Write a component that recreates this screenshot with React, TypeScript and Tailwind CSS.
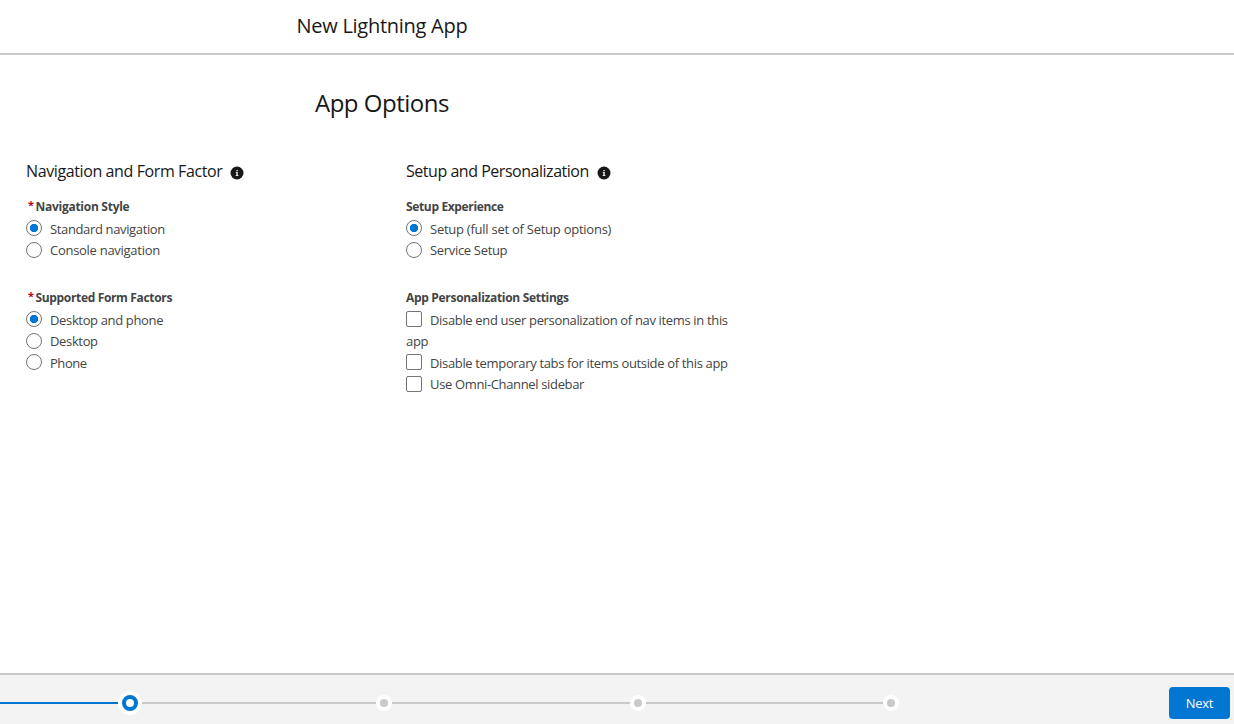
import React from "react";

const InfoIcon = () => (
  <svg viewBox="0 0 14 14" className="mt-0.5 h-3.5 w-3.5 shrink-0">
    <circle cx="7" cy="7" r="6.5" fill="#181818" />
    <path d="M6.4 3.9h1.4v1.3H6.4zM5.8 6.1h2v3h.6v.9H5.7v-.9h.6V7h-.5z" fill="#e5e5e5" />
  </svg>
);

type ChoiceProps = { kind: "radio" | "checkbox"; checked?: boolean; low?: boolean; text: string; track: string };

const Choice = ({ kind, checked, low, text, track }: ChoiceProps) => (
  <label className={`block leading-[21.5px] ${track}`}>
    <span
      className={`mr-2 inline-block size-4 border border-[#747474] ${low ? "align-[-3px]" : "align-[-2px]"} ${
        kind === "radio" ? "rounded-full" : "rounded-[2px]"
      } ${checked ? "bg-[radial-gradient(circle,#0176d3_3.8px,#ffffff_4.5px)]" : "bg-white"}`}
    />
    {text}
  </label>
);

const Legend = ({ text, track, required }: { text: string; track: string; required?: boolean }) => (
  <div className={`flex h-[18px] items-center text-[12px] leading-[18px] font-bold ${track}`}>
    {required && <span className="-mt-1 w-[9.5px] pl-0.5 text-[11px] text-[#ba0517]">*</span>}
    <span>{text}</span>
  </div>
);

const SectionTitle = ({ text, track }: { text: string; track: string }) => (
  <h2 className="flex h-6 items-center gap-2 text-[16px] text-[#181818]">
    <span className={`-mt-0.5 ${track}`}>{text}</span>
    <InfoIcon />
  </h2>
);

const Step = () => <span className="size-4 shrink-0 rounded-full border-4 border-white bg-[#c9c9c9]" />;

export default function App() {
  return (
    <div className="flex h-[724px] flex-col overflow-hidden bg-white font-['Open_Sans',sans-serif] text-[13px] text-[#444444]">
      <header className="h-[55px] shrink-0 border-b-2 border-[#c9c9c9] pt-[11px] pl-[296.5px]">
        <div className="text-[20px] leading-[30px] tracking-[-0.27px] text-[#181818]">New Lightning App</div>
      </header>

      <main className="flex-1">
        <h1 className="mt-[30px] pl-[315px] text-[24px] leading-9 tracking-[-0.5px] text-[#181818]">App Options</h1>
        <div className="mt-[39px] flex pl-[26px]">
          <section className="w-[380px]">
            <SectionTitle text="Navigation and Form Factor" track="tracking-[-0.39px]" />
            <div className="mt-[14px]">
              <Legend required text="Navigation Style" track="tracking-[-0.27px]" />
              <div className="mt-[2.6px]">
                <Choice kind="radio" checked text="Standard navigation" track="tracking-[-0.36px]" />
                <Choice kind="radio" low text="Console navigation" track="tracking-[-0.28px]" />
              </div>
            </div>
            <div className="mt-[27.4px]">
              <Legend required text="Supported Form Factors" track="tracking-[-0.34px]" />
              <div className="mt-[2.6px]">
                <Choice kind="radio" checked text="Desktop and phone" track="tracking-[-0.35px]" />
                <Choice kind="radio" low text="Desktop" track="tracking-[-0.35px]" />
                <Choice kind="radio" text="Phone" track="tracking-[-0.45px]" />
              </div>
            </div>
          </section>
          <section className="w-[340px]">
            <SectionTitle text="Setup and Personalization" track="tracking-[-0.47px]" />
            <div className="mt-[14px]">
              <Legend text="Setup Experience" track="tracking-[-0.35px]" />
              <div className="mt-[2.6px]">
                <Choice kind="radio" checked text="Setup (full set of Setup options)" track="tracking-[-0.25px]" />
                <Choice kind="radio" low text="Service Setup" track="tracking-[-0.32px]" />
              </div>
            </div>
            <div className="mt-[27.4px]">
              <Legend text="App Personalization Settings" track="tracking-[-0.31px]" />
              <div className="mt-[2.6px]">
                <Choice kind="checkbox" text="Disable end user personalization of nav items in this app" track="tracking-[-0.34px]" />
                <Choice kind="checkbox" text="Disable temporary tabs for items outside of this app" track="tracking-[-0.34px]" />
                <Choice kind="checkbox" low text="Use Omni-Channel sidebar" track="tracking-[-0.35px]" />
              </div>
            </div>
          </section>
        </div>
      </main>

      <footer className="flex h-[51px] shrink-0 items-center justify-between border-t-2 border-[#c9c9c9] bg-[#f3f3f3] pt-[7px] pr-1">
        <div className="flex h-6 w-[899px] items-center">
          <span className="h-0.5 w-[118px] bg-[#0176d3]" />
          <span className="flex size-6 shrink-0 items-center justify-center rounded-full bg-white">
            <span className="size-4 rounded-full border-4 border-[#0176d3] bg-white" />
          </span>
          <span className="h-0.5 w-[234px] bg-[#c9c9c9]" />
          <Step />
          <span className="h-0.5 w-[238px] bg-[#c9c9c9]" />
          <Step />
          <span className="h-0.5 w-[237px] bg-[#c9c9c9]" />
          <Step />
        </div>
        <button className="h-8 w-[61px] rounded bg-[#0176d3] pt-px tracking-[-0.3px] text-white">Next</button>
      </footer>
    </div>
  );
}
